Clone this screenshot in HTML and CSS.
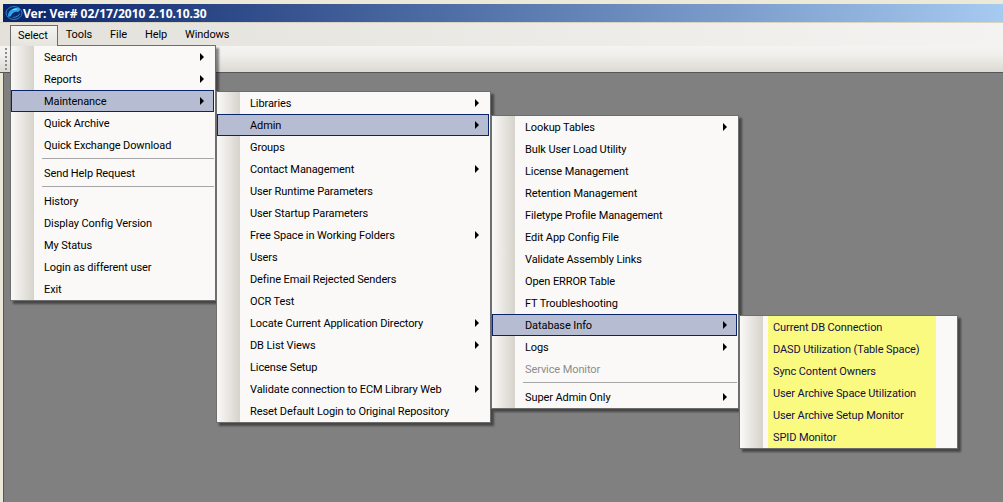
FILE: index.html
```html
<!DOCTYPE html>
<html lang="en">
<head>
  <meta charset="UTF-8">
  <title>Ver: Ver# 02/17/2010 2.10.10.30</title>
  <link rel="stylesheet" href="styles.css">
</head>
<body>

  <div class="window">
    <div class="titlebar">
      <svg class="logo" width="18" height="16" viewBox="0 0 18 16">
        <ellipse cx="9" cy="8" rx="8" ry="6.5" fill="#0a2c6e" stroke="#2f7fb8" stroke-width="1"/>
        <path d="M3 11C3 6 8 2 14 3C16 4 15 6 13 7C10 6 7 8 6 11C5 12 3 12 3 11Z" fill="#2fa4ea"/>
        <path d="M7 5C9 3.8 11.5 3.6 13 4C11 4.5 9 5 7 5Z" fill="#bfe6fa"/>
        <path d="M7 12C10 12.5 13 11 15 8C15 11 10 14 7 12Z" fill="#3f8fcc"/>
      </svg>
      <span>Ver: Ver# 02/17/2010 2.10.10.30</span>
    </div>

    <div class="menubar">
      <span class="top-item open">Select</span>
      <span class="top-item">Tools</span>
      <span class="top-item">File</span>
      <span class="top-item">Help</span>
      <span class="top-item">Windows</span>
    </div>

    <div class="toolbar"><div class="gripper"></div></div>
    <div class="workspace"></div>
  </div>

  <ul class="menu menu-select">
    <li class="sub">Search</li>
    <li class="sub">Reports</li>
    <li class="sub active">Maintenance</li>
    <li>Quick Archive</li>
    <li>Quick Exchange Download</li>
    <li class="sep"></li>
    <li>Send Help Request</li>
    <li class="sep"></li>
    <li>History</li>
    <li>Display Config Version</li>
    <li>My Status</li>
    <li>Login as different user</li>
    <li>Exit</li>
  </ul>

  <ul class="menu menu-maint">
    <li class="sub">Libraries</li>
    <li class="sub active">Admin</li>
    <li>Groups</li>
    <li class="sub">Contact Management</li>
    <li>User Runtime Parameters</li>
    <li>User Startup Parameters</li>
    <li class="sub">Free Space in Working Folders</li>
    <li>Users</li>
    <li>Define Email Rejected Senders</li>
    <li>OCR Test</li>
    <li class="sub">Locate Current Application Directory</li>
    <li class="sub">DB List Views</li>
    <li>License Setup</li>
    <li class="sub">Validate connection to ECM Library Web</li>
    <li>Reset Default Login to Original Repository</li>
  </ul>

  <ul class="menu menu-admin">
    <li class="sub">Lookup Tables</li>
    <li>Bulk User Load Utility</li>
    <li>License Management</li>
    <li>Retention Management</li>
    <li>Filetype Profile Management</li>
    <li>Edit App Config File</li>
    <li>Validate Assembly Links</li>
    <li>Open ERROR Table</li>
    <li>FT Troubleshooting</li>
    <li class="sub active">Database Info</li>
    <li class="sub">Logs</li>
    <li class="disabled">Service Monitor</li>
    <li class="sep"></li>
    <li class="sub">Super Admin Only</li>
  </ul>

  <ul class="menu menu-db">
    <li class="hl">Current DB Connection</li>
    <li class="hl">DASD Utilization (Table Space)</li>
    <li class="hl">Sync Content Owners</li>
    <li class="hl">User Archive Space Utilization</li>
    <li class="hl">User Archive Setup Monitor</li>
    <li class="hl">SPID Monitor</li>
  </ul>

</body>
</html>
```

FILE: styles.css
```css
html, body {
  margin: 0;
  height: 100%;
  overflow: hidden;
}
body {
  font-family: Roboto, sans-serif;
  font-size: 11px;
  letter-spacing: -0.1px;
  color: #000;
  background-color: #ece9d8;
}
.window {
  display: flex;
  flex-direction: column;
  height: 100%;
  padding-top: 4px;
  box-sizing: border-box;
}

/* title + bars */
.titlebar {
  display: flex;
  align-items: center;
  height: 18px;
  margin-left: 3px;
  padding-left: 2px;
  flex: none;
  color: #fff;
  font-family: "Noto Sans", sans-serif;
  font-weight: bold;
  font-size: 12px;
  letter-spacing: 0;
  background: linear-gradient(to right, #0a246a, #a6caf0);
}
.menubar {
  display: flex;
  gap: 2px;
  height: 24px;
  padding: 2px 0 0 10px;
  box-sizing: border-box;
  flex: none;
  border-top: 1px solid #d8d4c4;
  background: linear-gradient(to right, #e3e1da, #f4f3f1);
}
.top-item {
  padding: 0 8px;
  line-height: 19px;
}
.top-item.open {
  padding: 0 9px 0 7px;
  margin-right: -2px;
  border: 1px solid #6b6b6b;
  border-bottom: 0;
  background: linear-gradient(to bottom, #f4f3f0, #e6e4de);
  position: relative;
  z-index: 2;
}
.toolbar {
  height: 26px;
  flex: none;
  background: linear-gradient(to bottom, #f5f4f2, #f0efec 35%, #dcd9d2);
  border-bottom: 1px solid #55585a;
}
.gripper {
  width: 2px;
  height: 22px;
  margin: 2px 0 0 5px;
  background: repeating-linear-gradient(to bottom, #8f8d86 0 2px, transparent 2px 4px);
}
.workspace {
  flex: 1;
  margin-left: 3px;
  background-color: #808080;
  border-left: 1px solid #55585a;
}

/* popup menus */
.menu {
  position: absolute;
  margin: 0;
  padding: 0 1px 0 0;
  list-style: none;
  box-sizing: border-box;
  border: 1px solid #6e6e6e;
  box-shadow: 3px 3px 2px rgba(0, 0, 0, 0.45);
  background: linear-gradient(to right, #faf9f7, #d6d3cc) no-repeat 0 0 / 23px 100%, #faf9f7;
}
.menu li {
  display: flex;
  align-items: center;
  height: 22px;
  padding-left: 33px;
  box-sizing: border-box;
  white-space: nowrap;
}
.menu li.sub::after {
  content: "";
  margin-left: auto;
  margin-right: 10px;
  border-left: 4px solid #000;
  border-top: 4px solid transparent;
  border-bottom: 4px solid transparent;
}
.menu li.active {
  background-color: #b6bdd2;
  border: 1px solid #0a246a;
  padding-left: 32px;
}
.menu li.active.sub::after {
  margin-right: 9px;
}
.menu li.disabled {
  color: #8d8d8d;
}
.menu li.sep {
  height: 6px;
  padding: 0;
  margin-left: 31px;
  background: linear-gradient(#a6a6a6, #a6a6a6) no-repeat 0 2px / 100% 1px;
}
.menu-select {
  left: 10px;
  top: 45px;
  width: 206px;
  z-index: 1;
}
.menu-maint {
  left: 216px;
  top: 91px;
  width: 275px;
  z-index: 2;
}
.menu-admin {
  left: 491px;
  top: 115px;
  width: 248px;
  z-index: 3;
}
.menu-db {
  left: 739px;
  top: 315px;
  width: 219px;
  z-index: 4;
}
.menu-db li.hl {
  width: 168px;
  padding-left: 5px;
  margin-left: 28px;
  color: #10104a;
  background-color: #fafa80;
}
```
